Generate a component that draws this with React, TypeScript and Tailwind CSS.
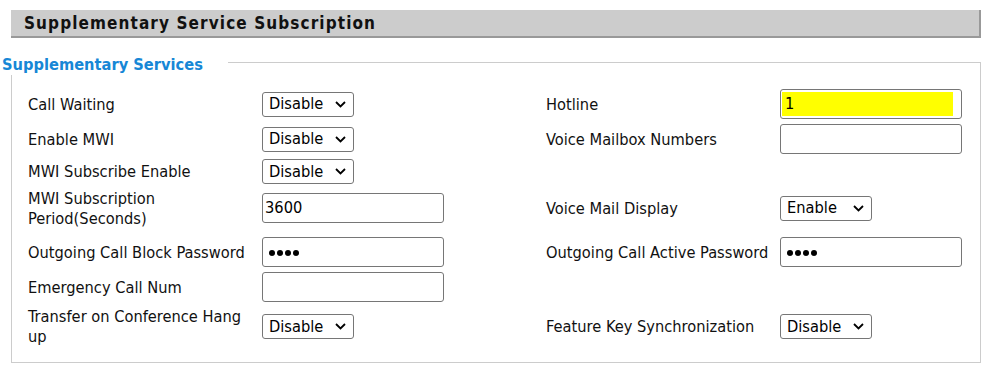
import React from "react";

const F = "font-['DejaVu_Sans_Condensed','DejaVu_Sans',sans-serif] font-stretch-condensed";

function Select({ value }: { value: string }) {
  return (
    <div className="flex h-[25px] w-[92px] items-center justify-between rounded-[3px] border border-[#767676] bg-white pl-[6px] pr-[7px] text-[16.3px] leading-none text-black">
      <span className="pt-[1px]">{value}</span>
      <svg width="11" height="7" viewBox="0 0 11 7">
        <path d="M1 1l4.5 4.5L10 1" stroke="#000" strokeWidth="1.8" fill="none" />
      </svg>
    </div>
  );
}

function Input({ children }: { children?: React.ReactNode }) {
  return (
    <div className="flex h-[30px] w-[182px] items-center rounded-[3px] border border-[#767676] bg-white pl-[2px] pt-[1px] text-[16.3px] text-black">
      {children}
    </div>
  );
}

function Dots() {
  return (
    <div className="flex gap-[2px] pl-[4px]">
      <span className="h-[6px] w-[6px] rounded-full bg-black" />
      <span className="h-[6px] w-[6px] rounded-full bg-black" />
      <span className="h-[6px] w-[6px] rounded-full bg-black" />
      <span className="h-[6px] w-[6px] rounded-full bg-black" />
    </div>
  );
}

function Label({ children }: { children: React.ReactNode }) {
  return <div className="pt-[1px] text-[16.3px] leading-[20px] text-[#111]">{children}</div>;
}

export default function App() {
  return (
    <div className={`${F} w-[1000px] h-[373px] bg-white pt-[10px] overflow-hidden`}>
      <div className="ml-[11px] flex h-[28px] w-[970px] items-center border-r-2 border-b-2 border-[#999999] bg-[#cccccc] pl-[13px]">
        <span className="pt-[1px] text-[17px] font-bold tracking-[1.1px] text-[#111]">Supplementary Service Subscription</span>
      </div>
      <div className="relative ml-[11px] mt-[24px] w-[970px] border border-[#cccccc] pb-[9px] pl-[16px] pt-[24px]">
        <div className="absolute left-[-10px] top-[-8px] bg-white pr-[25px] text-[16.3px] font-bold leading-[20px] text-[#1787d6]">
          Supplementary Services
        </div>
        <div className="grid grid-cols-[234px_284px_234px_1fr] grid-rows-[34px_36px_29px_44px_44px_26px_53px] items-center">
          <Label>Call Waiting</Label>
          <Select value="Disable" />
          <Label>Hotline</Label>
          <div className="flex h-[30px] w-[182px] rounded-[3px] border border-[#767676] bg-white py-[2px] pl-[1px] pr-[8px]">
            <div className="flex h-full w-full items-center bg-[#ffff00] pl-[3px] pt-[1px] text-[16.3px] text-black">1</div>
          </div>

          <Label>Enable MWI</Label>
          <Select value="Disable" />
          <Label>Voice Mailbox Numbers</Label>
          <Input />

          <Label>MWI Subscribe Enable</Label>
          <Select value="Disable" />
          <div />
          <div />

          <Label>
            MWI Subscription
            <br />
            Period(Seconds)
          </Label>
          <Input>3600</Input>
          <Label>Voice Mail Display</Label>
          <Select value="Enable" />

          <Label>Outgoing Call Block Password</Label>
          <Input>
            <Dots />
          </Input>
          <Label>Outgoing Call Active Password</Label>
          <Input>
            <Dots />
          </Input>

          <Label>Emergency Call Num</Label>
          <Input />
          <div />
          <div />

          <Label>
            Transfer on Conference Hang
            <br />
            up
          </Label>
          <Select value="Disable" />
          <Label>Feature Key Synchronization</Label>
          <Select value="Disable" />
        </div>
      </div>
    </div>
  );
}
